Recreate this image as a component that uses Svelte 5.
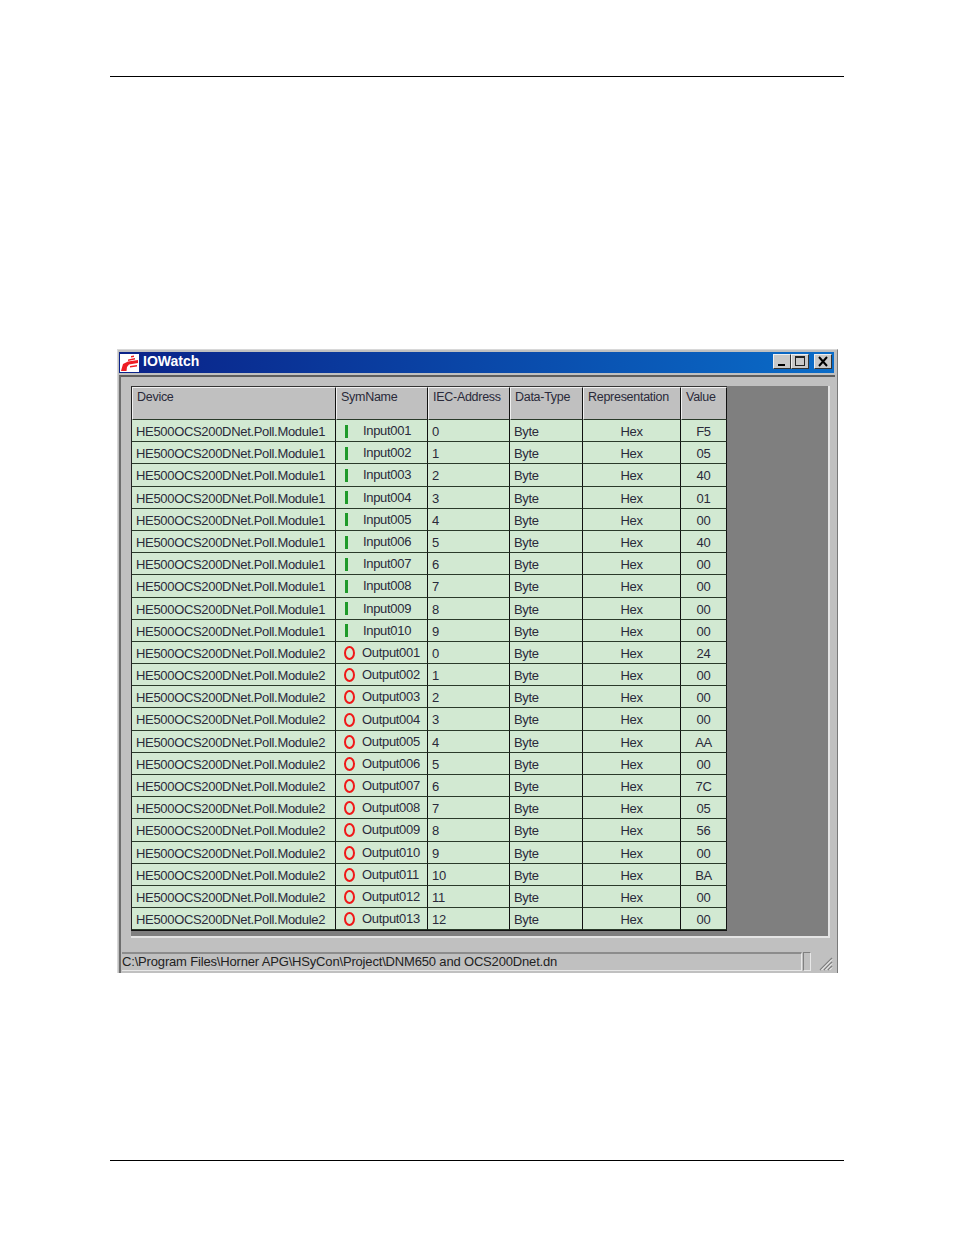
<script>
  const columns = [
    { name: "Device", cls: "device" },
    { name: "SymName", cls: "sym" },
    { name: "IEC-Address", cls: "iec" },
    { name: "Data-Type", cls: "type" },
    { name: "Representation", cls: "rep" },
    { name: "Value", cls: "value" },
  ];

  const inputValues = ["F5", "05", "40", "01", "00", "40", "00", "00", "00", "00"];
  const outputValues = ["24", "00", "00", "00", "AA", "00", "7C", "05", "56", "00", "BA", "00", "00"];

  const pad = (n) => String(n).padStart(3, "0");

  const rows = [
    ...inputValues.map((value, i) => ({
      device: "HE500OCS200DNet.Poll.Module1",
      kind: "I",
      sym: "Input" + pad(i + 1),
      iec: i,
      value,
    })),
    ...outputValues.map((value, i) => ({
      device: "HE500OCS200DNet.Poll.Module2",
      kind: "O",
      sym: "Output" + pad(i + 1),
      iec: i,
      value,
    })),
  ];
</script>

<div class="page">
  <div class="rule"></div>

  <div class="window">
    <div class="titlebar">
      <svg class="logo" width="19" height="18" viewBox="0 0 19 18">
        <rect width="19" height="18" fill="#fff" />
        <path d="M1 17 L3 10 L8 7.5 L18 6 L18 9 L9 10.5 L7 13 L6.5 17 Z" fill="#ee1c24" />
        <path d="M8 5.5 L15 4 L15 5.5 L8 7 Z M11 2 L14 1.5 L14 3 L11 3.5 Z" fill="#ee1c24" />
        <path d="M10 12 L17 11 L17 12.5 L10 13.5 Z" fill="#ee1c24" />
      </svg>
      <span class="title">IOWatch</span>
      <div class="buttons">
        <div class="btn">
          <svg width="16" height="13" viewBox="0 0 16 13"><rect x="4" y="9" width="7" height="2" fill="#000" /></svg>
        </div>
        <div class="btn">
          <svg width="16" height="13" viewBox="0 0 16 13"><path d="M3 1.5h10M3 2.5h10M3.5 2v9M12.5 2v9M3 10.5h10" stroke="#222" fill="none" /></svg>
        </div>
        <div class="btn close">
          <svg width="16" height="13" viewBox="0 0 16 13"><path d="M4 2 L12 11 M12 2 L4 11" stroke="#000" stroke-width="2" /></svg>
        </div>
      </div>
    </div>

    <div class="panel">
      <div class="client">
        <div class="grid">
          {#each columns as col}
            <div class="head {col.cls}">{col.name}</div>
          {/each}

          {#each rows as row}
            <div class="cell device">{row.device}</div>
            <div class="cell sym">
              {#if row.kind === "I"}
                <span class="mark in"></span>
              {:else}
                <span class="mark out"></span>
              {/if}
              <span>{row.sym}</span>
            </div>
            <div class="cell iec">{row.iec}</div>
            <div class="cell type">Byte</div>
            <div class="cell rep">Hex</div>
            <div class="cell value">{row.value}</div>
          {/each}
        </div>
      </div>

      <div class="status">
        <div class="path">C:\Program Files\Horner APG\HSyCon\Project\DNM650 and OCS200Dnet.dn</div>
        <div class="pane"></div>
        <svg class="grip" width="15" height="15" viewBox="0 0 15 15">
          <path d="M14 2 L2 14 M14 6 L6 14 M14 10 L10 14" stroke="#808080" stroke-width="1.4" />
          <path d="M14 3.5 L3.5 14 M14 7.5 L7.5 14 M14 11.5 L11.5 14" stroke="#fff" stroke-width="1" />
        </svg>
      </div>
    </div>
  </div>

  <div class="rule bottom"></div>
</div>

<style>
  :global(body) {
    background: #fff;
  }

  .page {
    width: 954px;
    height: 1235px;
    padding: 76px 110px 0;
    box-sizing: border-box;
    font-family: "Liberation Sans", Arial, sans-serif;
    font-size: 13px;
    color: #2a2a3a;
  }

  .rule {
    height: 1px;
    background: #000;
  }

  .rule.bottom {
    margin-top: 187px;
  }

  .window {
    width: 721px;
    height: 624px;
    margin: 272px 0 0 7px;
    box-sizing: border-box;
    padding: 2px 2px 0 1px;
    background: #c0c0c0;
    border-top: 1px solid #d8d8d8;
    border-left: 1px solid #d8d8d8;
    border-right: 1px solid #7a7a7a;
    display: flex;
    flex-direction: column;
  }

  .titlebar {
    height: 21px;
    display: flex;
    align-items: center;
    background: linear-gradient(90deg, #0a2288 0%, #0a6cc8 100%);
    padding: 0 2px 0 1px;
    margin-right: 1px;
    flex: none;
  }

  .logo {
    flex: none;
  }

  .title {
    margin-left: 4px;
    color: #fff;
    font-weight: bold;
    font-size: 14px;
    line-height: 18px;
    margin-top: -3px;
  }

  .buttons {
    margin-left: auto;
    display: flex;
    margin-top: -2px;
  }

  .btn {
    width: 18px;
    height: 15px;
    background: #c8c8c8;
    border: 1px solid;
    border-color: #eee #333 #333 #eee;
    box-sizing: border-box;
    display: flex;
    align-items: center;
    justify-content: center;
    overflow: hidden;
  }

  .btn.close {
    margin-left: 5px;
  }

  .btn svg {
    flex: none;
  }

  .panel {
    margin-top: 2px;
    flex: 1;
    min-height: 0;
    border-top: 2px solid #5e5e5e;
    border-left: 2px solid #6e6e6e;
    padding: 9px 5px 0 0;
    display: flex;
    flex-direction: column;
  }

  .client {
    height: 552px;
    margin-left: 10px;
    box-sizing: border-box;
    background: #7f7f7f;
    border-right: 2px solid #e4e4e4;
    border-bottom: 2px solid #e4e4e4;
    flex: none;
  }

  .grid {
    display: grid;
    grid-template-columns: 204px 92px 82px 73px 98px 46px;
    grid-template-rows: 33px;
    grid-auto-rows: 22.2px;
    width: 595px;
    border-top: 1px solid #333;
    border-left: 1px solid #222;
    border-bottom: 1px solid #111;
    box-sizing: content-box;
  }

  .head,
  .cell {
    box-sizing: border-box;
    border-right: 1px solid #111;
    border-bottom: 1px solid #2a3a2a;
    white-space: nowrap;
    overflow: hidden;
  }

  .head {
    background: #c0c0c0;
    border-top: 1px solid #f0f0f0;
    border-left: 1px solid #f0f0f0;
    padding: 1px 0 0 4px;
    font-size: 12.5px;
    line-height: 17px;
    letter-spacing: -0.28px;
  }

  .cell {
    background: #d2e9d2;
    padding-left: 4px;
    padding-top: 1px;
    line-height: 22px;
    letter-spacing: -0.32px;
  }

  .cell.sym {
    display: flex;
    align-items: center;
    padding-left: 0;
  }

  .mark {
    flex: none;
    box-sizing: border-box;
  }

  .mark.in {
    width: 3px;
    height: 13px;
    margin-left: 9px;
    margin-right: 15px;
    background: #1f9a2a;
  }

  .mark.out {
    width: 11px;
    height: 14px;
    margin-left: 8px;
    margin-right: 7px;
    border-style: solid;
    border-color: #f01818;
    border-width: 2px 2.5px;
    border-radius: 50%;
  }

  .cell.rep,
  .cell.value {
    text-align: center;
    padding-left: 0;
  }

  .status {
    position: relative;
    margin-top: 14px;
    margin-left: 1px;
    height: 19px;
    display: flex;
    flex: none;
  }

  .path {
    width: 680px;
    box-sizing: border-box;
    border-top: 2px solid #8c8c8c;
    border-bottom: 1px solid #e8e8e8;
    border-right: 1px solid #e8e8e8;
    line-height: 15px;
    letter-spacing: -0.17px;
    white-space: nowrap;
    color: #222;
  }

  .pane {
    width: 8px;
    margin-left: 1px;
    box-sizing: border-box;
    border: 1px solid;
    border-color: #808080 #e8e8e8 #e8e8e8 #808080;
  }

  .grip {
    position: absolute;
    right: -3px;
    bottom: 0;
  }
</style>
